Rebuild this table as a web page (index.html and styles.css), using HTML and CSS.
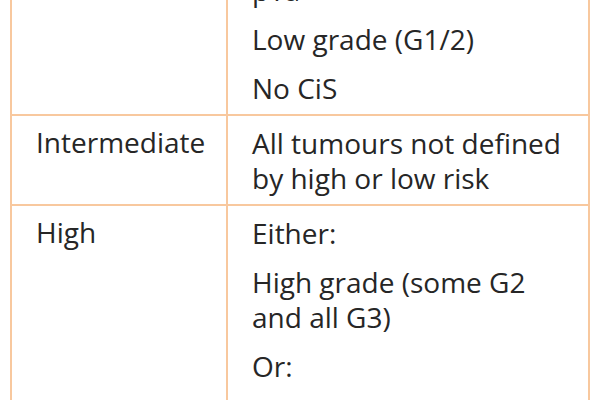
FILE: index.html
```html
<!DOCTYPE html>
<html lang="en">
<head>
<meta charset="utf-8">
<title>Risk groups</title>
<link rel="stylesheet" href="styles.css">
</head>
<body>
<table class="risk-table">
  <colgroup>
    <col class="col-group">
    <col class="col-criteria">
  </colgroup>
  <tbody>
    <tr>
      <td class="group">Low</td>
      <td class="criteria">
        <p>All of:</p>
        <p>Solitary</p>
        <p>pTa</p>
        <p>Low grade (G1/2)</p>
        <p>No CiS</p>
      </td>
    </tr>
    <tr>
      <td class="group">Intermediate</td>
      <td class="criteria">
        <p>All tumours not defined by high or low risk</p>
      </td>
    </tr>
    <tr>
      <td class="group">High</td>
      <td class="criteria">
        <p>Either:</p>
        <p>High grade (some G2 and all G3)</p>
        <p>Or:</p>
        <p>pT1</p>
      </td>
    </tr>
  </tbody>
</table>
</body>
</html>
```

FILE: styles.css
```css
html, body {
  margin: 0;
  padding: 0;
  background: #ffffff;
}

body {
  font-family: "Open Sans", "Noto Sans", sans-serif;
  font-size: 28px;
  line-height: 35px;
  color: #262626;
  overflow: hidden;
}

.risk-table {
  width: 580px;
  margin: -137px 0 0 10px;
  border-collapse: collapse;
  table-layout: fixed;
}

.col-group {
  width: 216px;
}

.risk-table td {
  border: 2px solid #f8c89e;
  padding: 10px 24px 8px 24px;
  vertical-align: top;
}

.risk-table td.group {
  padding-top: 9px;
}

.risk-table p {
  margin: 0;
}

.risk-table p + p {
  margin-top: 14px;
}
```
